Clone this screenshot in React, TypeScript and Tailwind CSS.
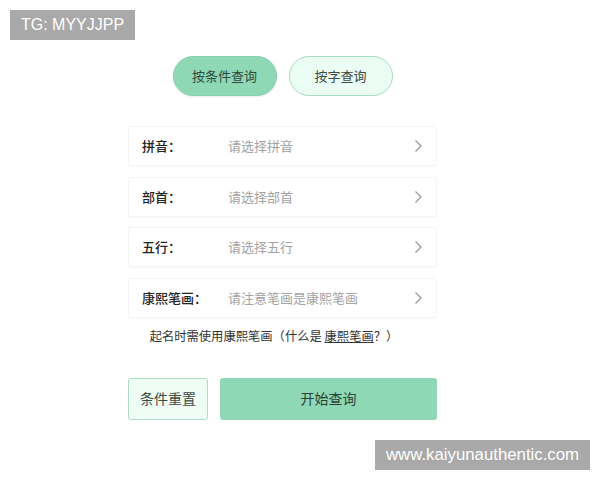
import { useState } from 'react';

const rows = [
  { label: '拼音：', placeholder: '请选择拼音' },
  { label: '部首：', placeholder: '请选择部首' },
  { label: '五行：', placeholder: '请选择五行' },
  { label: '康熙笔画：', placeholder: '请注意笔画是康熙笔画' },
];

const Chevron = () => (
  <svg width="9" height="14" viewBox="0 0 9 14" fill="none">
    <path d="M1.5 1.5 L7 7 L1.5 12.5" stroke="#9a9a9a" strokeWidth="1.3" />
  </svg>
);

const App = () => {
  const [tab, setTab] = useState(0);

  return (
    <div
      className="relative w-[600px] h-[480px] bg-white overflow-hidden"
      style={{ fontFamily: '"Noto Sans CJK SC", "Noto Sans", sans-serif' }}
    >
      {/* watermark top */}
      <div className="absolute left-[10px] top-[10px] w-[125px] h-[30px] bg-[#a9a9a9] text-white text-[16px] flex items-center justify-center" style={{ fontFamily: '"Liberation Sans", Arial, sans-serif' }}>
        TG: MYYJJPP
      </div>

      <div className="ml-[128px] w-[309px] pt-[56px] flex flex-col">
        <div className="flex justify-center gap-[12px]">
          <button
            onClick={() => setTab(0)}
            className="w-[104px] h-[40px] rounded-full bg-[#8fd8b5] text-[13px] text-[#2e4a3c] border border-[#86d0ad] shadow-[0_1px_2px_rgba(0,0,0,0.08)]"
          >
            按条件查询
          </button>
          <button
            onClick={() => setTab(1)}
            className="w-[104px] h-[40px] rounded-full bg-[#ebfcf4] text-[13px] text-[#3b4a43] border border-[#a9dcc4]"
          >
            按字查询
          </button>
        </div>

        <div className="mt-[30px] flex flex-col gap-[10.5px]">
          {rows.map((r) => (
            <div
              key={r.label}
              className="h-[40px] flex items-center pl-[13px] pr-[13px] bg-white border border-[#f4f4f4] rounded-[2px] shadow-[0_1px_2px_rgba(0,0,0,0.025)]"
            >
              <span className="w-[86px] text-[13px] font-medium text-[#222]">{r.label}</span>
              <span className="flex-1 text-[13px] text-[#a3a3a3]">{r.placeholder}</span>
              <Chevron />
            </div>
          ))}
        </div>

        <p className="mt-[9px] text-center text-[12.3px] text-[#333] pr-[17px]">
          起名时需使用康熙笔画（什么是 <span className="underline">康熙笔画</span>？）
        </p>

        <div className="mt-[33px] flex gap-[12px]">
          <button className="w-[80px] h-[42px] rounded-[3px] bg-[#eefdf6] border border-[#afdbc8] text-[14px] text-[#3d4a44]">
            条件重置
          </button>
          <button className="flex-1 h-[42px] rounded-[3px] bg-[#8fd8b5] text-[14px] text-[#2a3f34]">
            开始查询
          </button>
        </div>
      </div>

      {/* watermark bottom */}
      <div className="absolute left-[375px] top-[440px] w-[215px] h-[30px] bg-[#a9a9a9] text-white text-[16.8px] flex items-center justify-center" style={{ fontFamily: '"Liberation Sans", Arial, sans-serif' }}>
        www.kaiyunauthentic.com
      </div>
    </div>
  );
};

export default App;
